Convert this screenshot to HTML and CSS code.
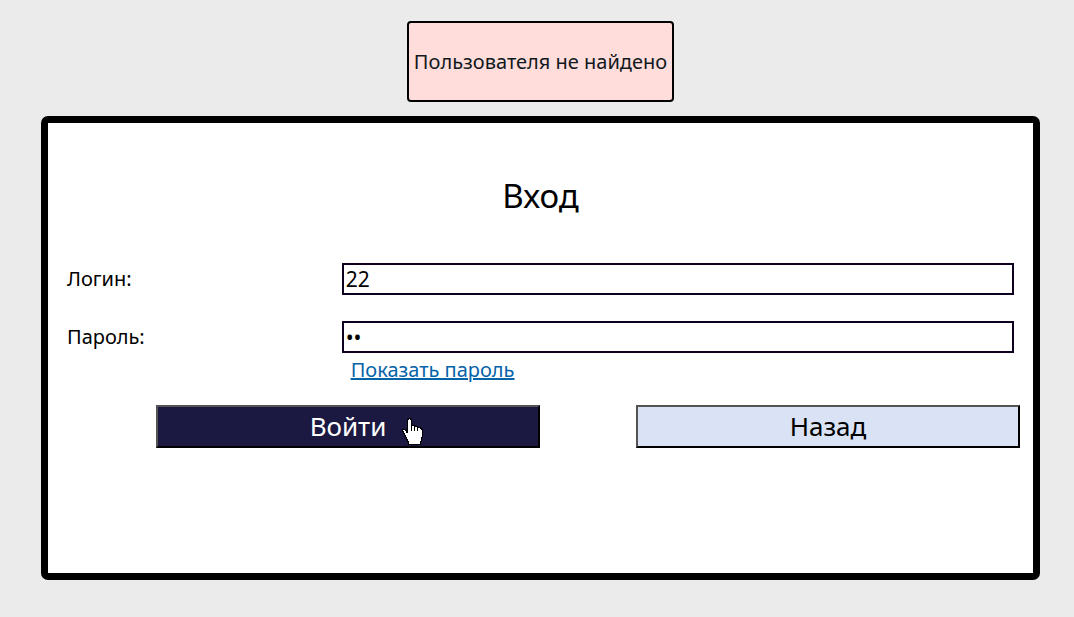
FILE: index.html
```html
<!DOCTYPE html>
<html lang="ru">
<head>
<meta charset="utf-8">
<meta name="viewport" content="width=device-width, initial-scale=1">
<title>Вход</title>
<link rel="stylesheet" href="styles.css">
</head>
<body class="page">
<p class="alert" role="alert">Пользователя не найдено</p>
<main class="card">
<h1 class="title">Вход</h1>
<form class="form">
<div class="fields">
<label class="label" for="login">Логин:</label>
<input class="input" id="login" type="text" value="22">
<label class="label" for="password">Пароль:</label>
<input class="input" id="password" type="password" value="22">
<a class="toggle" href="#password">Показать пароль</a>
</div>
<div class="actions">
<button class="button button-primary" type="submit">Войти
<svg class="pointer" viewBox="0 0 22 28" width="22" height="28" aria-hidden="true"><path d="M5.500 1.500h1v-1h2v1h1v6h3v1h3v1h3v1h1v1h1v8h-1v4h-1v3h-12v-3h-1v-2h-1v-2h-1v-2h-1v-2h-1v-2h-1v-2h3v1h1v2h1z" fill="#fff" stroke="#000"/><path d="M9.500 7v6M12.500 8v5M15.500 9v4M7 26.500h12" fill="none" stroke="#000"/></svg>
</button>
<button class="button button-secondary" type="button">Назад</button>
</div>
</form>
</main>
</body>
</html>
```
FILE: styles.css
```css
* {
  box-sizing: border-box;
}

.page {
  display: flex;
  flex-direction: column;
  gap: 14px;
  margin: 0;
  padding: 21px 34px 37px 41px;
  background: #ebebeb;
  color: #000;
  font-family: "Noto Sans", "Open Sans", sans-serif;
  font-size: 20px;
  line-height: 27px;
}

.alert {
  align-self: center;
  margin: 0;
  padding: 25px 5px;
  border: 2px solid #000;
  border-radius: 4px;
  background: #ffdddb;
  color: #101820;
}

.card {
  padding: 49px 0 125px;
  border: 7px solid #000;
  border-radius: 7px;
  background: #fff;
}

.title {
  margin: 0 0 43px;
  font-size: 33px;
  font-weight: 400;
  line-height: 48px;
  text-align: center;
}

.fields {
  display: grid;
  grid-template-columns: 29fr 71fr;
  row-gap: 26px;
  align-items: center;
  padding: 0 19px;
}

.label {
  padding-bottom: 2px;
}

.input {
  width: 100%;
  height: 32px;
  padding: 0 2px;
  border: 2px solid #10001f;
  border-radius: 0;
  outline: 0;
  background: #fff;
  color: #000;
  font: inherit;
  font-size: 21px;
}

.toggle {
  grid-column: 2;
  justify-self: start;
  margin: -23px 0 0 9px;
  color: #0563a8;
}

.actions {
  display: grid;
  grid-template-columns: 1fr 1fr;
  gap: 96px;
  padding: 22px 13px 0 108px;
}

.button {
  position: relative;
  height: 43px;
  padding: 0;
  border: 2px outset #000;
  border-radius: 0;
  font: inherit;
  font-size: 26px;
  cursor: pointer;
}

.button-primary {
  background: #1b1941;
  color: #fff;
}

.button-secondary {
  background: #dae3f6;
  color: #000;
}

.pointer {
  position: absolute;
  top: 11px;
  left: calc(50% + 54px);
  shape-rendering: crispEdges;
}
```
